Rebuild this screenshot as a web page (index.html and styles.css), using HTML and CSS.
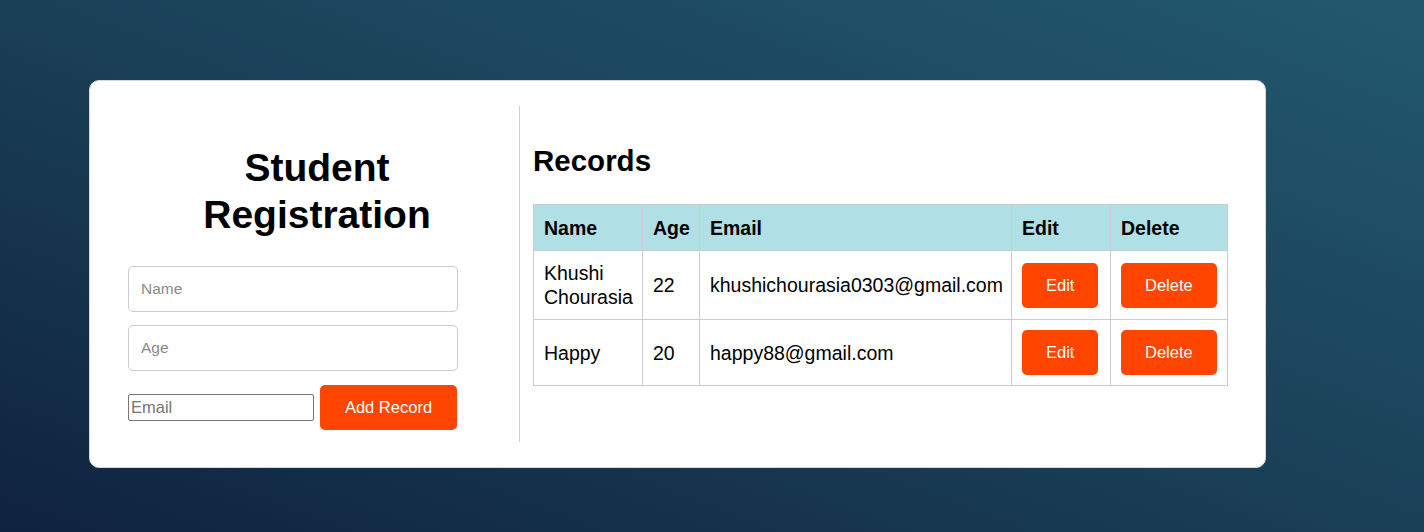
FILE: index.html
```html
<!DOCTYPE html>
<html lang="en">
<head>
<meta charset="utf-8">
<title>Student Registration</title>
<link rel="stylesheet" href="styles.css">
</head>
<body>
<div class="page">
  <div class="card">
    <section class="form-col">
      <h1 class="title">Student Registration</h1>
      <form class="form">
        <input class="field" type="text" placeholder="Name">
        <input class="field" type="text" placeholder="Age">
        <div class="form-row">
          <input class="email" type="email" placeholder="Email">
          <button type="button" class="btn btn-add">Add Record</button>
        </div>
      </form>
    </section>
    <section class="records-col">
      <h2 class="records-title">Records</h2>
      <table class="records">
        <colgroup>
          <col class="c-name"><col class="c-age"><col class="c-email"><col class="c-edit"><col class="c-del">
        </colgroup>
        <thead>
          <tr><th>Name</th><th>Age</th><th>Email</th><th>Edit</th><th>Delete</th></tr>
        </thead>
        <tbody>
          <tr>
            <td>Khushi Chourasia</td><td>22</td><td>khushichourasia0303@gmail.com</td>
            <td><button type="button" class="btn btn-cell">Edit</button></td>
            <td><button type="button" class="btn btn-cell">Delete</button></td>
          </tr>
          <tr>
            <td>Happy</td><td>20</td><td>happy88@gmail.com</td>
            <td><button type="button" class="btn btn-cell">Edit</button></td>
            <td><button type="button" class="btn btn-cell">Delete</button></td>
          </tr>
        </tbody>
      </table>
    </section>
  </div>
</div>
</body>
</html>
```
FILE: styles.css
```css
* { box-sizing: border-box; }
html, body { margin: 0; padding: 0; }
body {
  font-family: "Liberation Sans", Arial, sans-serif;
  color: #000;
  min-height: 100vh;
  background: linear-gradient(to top right, #0f2240 0%, #1a4058 50%, #22596f 100%);
}
.page {
  padding: 80px 0 0 89px;
  min-height: 100vh;
}
.card {
  width: 1177px;
  background: #fff;
  border: 1px solid #d8d8d8;
  border-radius: 10px;
  padding: 25px 25px 25px 25px;
  display: flex;
  align-items: stretch;
}
.form-col {
  width: 405px;
  flex: none;
  border-right: 1px solid #cfcfcf;
  padding: 38px 13px 12px 13px;
}
.title {
  margin: 0 0 28px 0;
  font-size: 39px;
  line-height: 47px;
  font-weight: bold;
  text-align: center;
}
.form {
  width: 330px;
  display: flex;
  flex-direction: column;
  gap: 13px;
}
.field {
  height: 46px;
  width: 330px;
  border: 1px solid #cccccc;
  border-radius: 5px;
  padding: 0 12px;
  font-family: "Liberation Sans", Arial, sans-serif;
  font-size: 15.5px;
  color: #333;
}
.field::placeholder { color: #8a8a8a; }
.form-row {
  display: flex;
  align-items: center;
  gap: 6px;
  margin-top: 1px;
}
.email {
  width: 186px;
  height: 27px;
  border: 1px solid #767676;
  border-radius: 2px;
  padding: 1px 2px;
  font-family: "Liberation Sans", Arial, sans-serif;
  font-size: 16.5px;
}
.email::placeholder { color: #757575; }
.btn {
  background: #ff4500;
  color: #fff;
  border: none;
  border-radius: 5px;
  font-family: "Liberation Sans", Arial, sans-serif;
  font-size: 16.5px;
  cursor: pointer;
}
.btn-add {
  width: 137px;
  height: 45px;
  padding: 0;
}
.records-col {
  flex: 1;
  padding: 38px 12px 0 13px;
}
.records-title {
  margin: 0 0 26px 0;
  font-size: 29.5px;
  line-height: 34px;
  font-weight: bold;
}
.records {
  width: 694px;
  table-layout: fixed;
  border-collapse: collapse;
  border: 1px solid #cccccc;
  font-size: 19.5px;
  line-height: 24px;
}
.c-name { width: 109px; }
.c-age { width: 57px; }
.c-email { width: 312px; }
.c-edit { width: 99px; }
.c-del { width: 117px; }
.records th, .records td {
  border: 1px solid #cccccc;
  padding: 10px 10px;
  text-align: left;
  vertical-align: middle;
}
.records th {
  background: #b0dfe5;
  font-weight: bold;
  padding: 11px 10px 10px 10px;
}
.btn-cell {
  height: 45px;
  padding: 0 24px;
  display: inline-block;
  vertical-align: middle;
}
```
